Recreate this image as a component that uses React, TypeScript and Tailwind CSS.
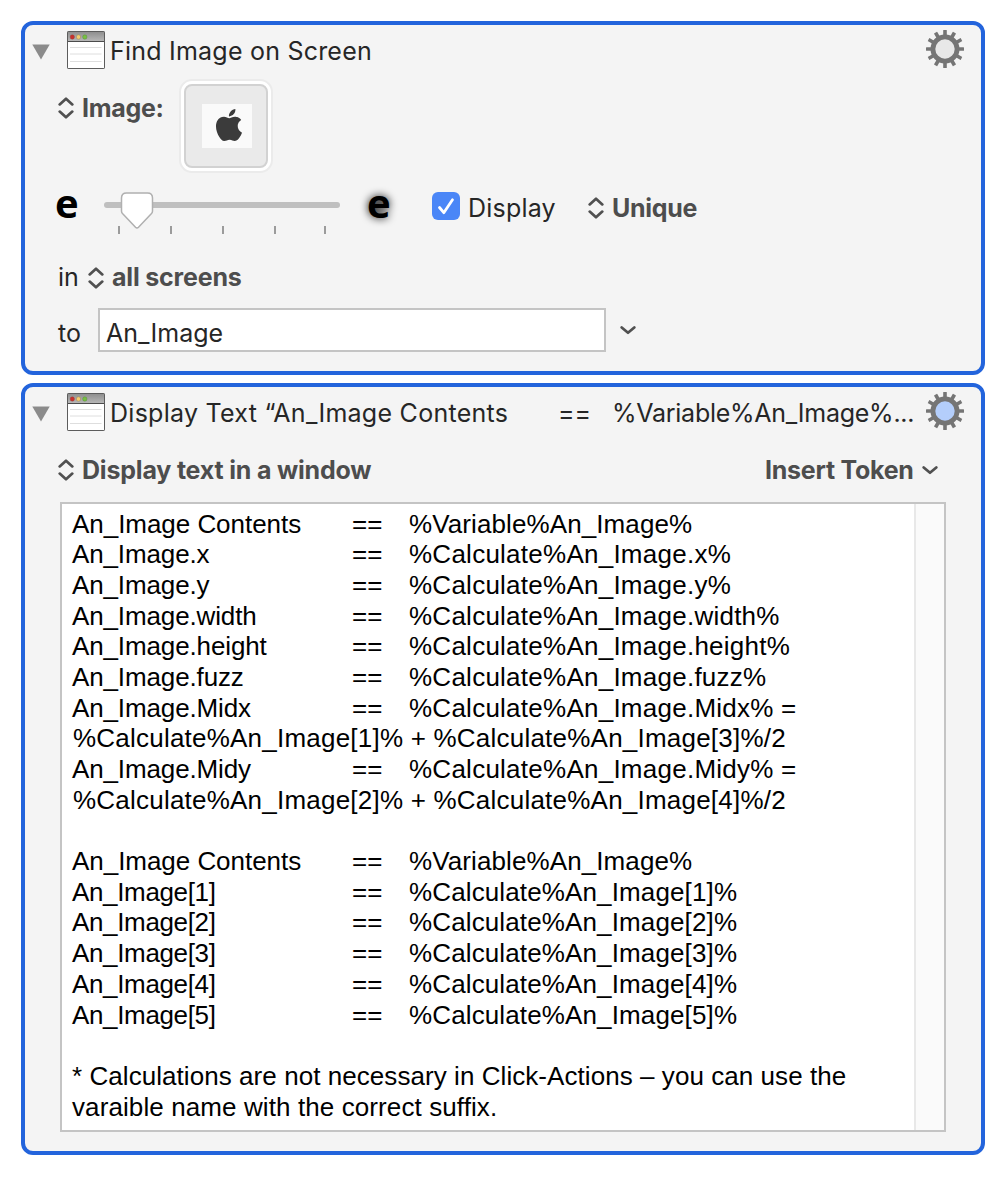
import React from "react";

interface IconProps {
  className?: string;
}

const UpDown: React.FC<IconProps> = ({ className }) => (
  <svg
    viewBox="0 0 16 22"
    className={`h-[22px] w-4 shrink-0 ${className ?? ""}`}
    fill="none"
    stroke="#505050"
    strokeWidth="2.7"
    strokeLinecap="round"
    strokeLinejoin="round"
  >
    <path d="M1.700 7.400 8 1.700l6.300 5.700M1.700 14.600l6.300 5.700 6.300-5.700" />
  </svg>
);

const Down: React.FC<IconProps> = ({ className }) => (
  <svg
    viewBox="0 0 16 10"
    className={`h-2.5 w-4 shrink-0 ${className ?? ""}`}
    fill="none"
    stroke="#505050"
    strokeWidth="2.7"
    strokeLinecap="round"
    strokeLinejoin="round"
  >
    <path d="M1.700 2.400 8 7.800l6.300-5.400" />
  </svg>
);

const WindowIcon = () => (
  <svg viewBox="0 0 38 38" className="ml-[17px] h-[38px] w-[38px] shrink-0">
    <defs>
      <linearGradient id="titlebar" x1="0" y1="0" x2="0" y2="1">
        <stop offset="0" stopColor="#8f8f8f" />
        <stop offset="1" stopColor="#b9b9b9" />
      </linearGradient>
    </defs>
    <rect x="0.5" y="0.5" width="37" height="37" rx="0.6" fill="#fff" stroke="#5c5c5c" />
    <rect x="1" y="1" width="36" height="9.5" fill="url(#titlebar)" />
    <path d="M1 10.500h36" stroke="#4b4b4b" strokeWidth="1" />
    <circle cx="5.3" cy="6" r="2.2" fill="#c9302c" stroke="#8a4a44" strokeWidth="0.4" />
    <circle cx="11.5" cy="6" r="2.2" fill="#f3cd72" stroke="#8d7a4c" strokeWidth="0.4" />
    <circle cx="17.8" cy="6" r="2.2" fill="#76c043" stroke="#55823a" strokeWidth="0.4" />
    <path d="M3 16.500h31.500M3 23h31.500M3 30.500h31.500" stroke="#dedede" strokeWidth="1" />
  </svg>
);

interface GearProps {
  fill: string;
}

const Gear: React.FC<GearProps> = ({ fill }) => (
  <svg viewBox="-19 -19 38 38" className="h-[38px] w-[38px] shrink-0">
    {Array.from({ length: 12 }, (_, i) => (
      <rect
        key={i}
        x="-1.8"
        y="-19"
        width="3.6"
        height="8"
        rx="0.5"
        fill="#757575"
        transform={`rotate(${i * 30})`}
      />
    ))}
    <circle r="12.1" fill={fill} stroke="#757575" strokeWidth="4.800" />
  </svg>
);

interface HeaderProps {
  gearFill: string;
  children: React.ReactNode;
}

const Header: React.FC<HeaderProps> = ({ gearFill, children }) => (
  <div className="flex h-[38px] items-center pl-[7px]">
    <svg viewBox="0 0 18 16" className="mt-[3px] h-4 w-[18px] shrink-0">
      <path d="M0.300 0.500h17.400L9 15.500z" fill="#8b8b8b" />
    </svg>
    <WindowIcon />
    <div className="ml-[5px] flex flex-1 whitespace-pre pt-[2px]">{children}</div>
    <div className="-mt-[2px] mr-[17px]">
      <Gear fill={gearFill} />
    </div>
  </div>
);

const Slider = () => (
  <svg viewBox="0 0 236 46" className="ml-[28px] h-[46px] w-[236px] shrink-0">
    <rect x="0" y="12" width="236" height="6" rx="3" fill="#bfbfbf" />
    {[14, 66, 118, 170, 220].map((x) => (
      <rect key={x} x={x} y="36" width="2" height="8" fill="#9b9b9b" />
    ))}
    <path
      d="M22.500 3h21q5 0 5 5v13q0 1.500-1 2.600L34.500 37.200q-1.500 1.500-3 0L18.500 23.600q-1-1.100-1-2.600V8q0-5 5-5z"
      fill="#fff"
      stroke="#b0b0b0"
      strokeWidth="1.500"
    />
  </svg>
);

const AppleLogo = () => (
  <svg viewBox="0 0 24 24" className="mb-[3px] ml-[3px] h-8 w-8" fill="#3b3b3b">
    <path d="M12.152 6.896c-.948 0-2.415-1.078-3.960-1.040-2.040.027-3.910 1.183-4.961 3.014-2.117 3.675-.546 9.103 1.519 12.090 1.013 1.454 2.208 3.090 3.792 3.039 1.520-.065 2.090-.987 3.935-.987 1.831 0 2.350.987 3.960.948 1.637-.026 2.676-1.480 3.676-2.948 1.156-1.688 1.636-3.325 1.662-3.415-.039-.013-3.182-1.221-3.220-4.857-.026-3.040 2.480-4.494 2.597-4.559-1.429-2.090-3.623-2.324-4.390-2.376-2-.156-3.675 1.090-4.610 1.090zM15.530 3.830c.843-1.012 1.400-2.427 1.245-3.830-1.207.052-2.662.805-3.532 1.818-.780.896-1.454 2.338-1.273 3.714 1.338.104 2.715-.688 3.559-1.701" />
  </svg>
);

const rows: [string, string, string?][] = [
  ["An_Image Contents", "%Variable%An_Image%"],
  ["An_Image.x", "%Calculate%An_Image.x%"],
  ["An_Image.y", "%Calculate%An_Image.y%"],
  ["An_Image.width", "%Calculate%An_Image.width%"],
  ["An_Image.height", "%Calculate%An_Image.height%"],
  ["An_Image.fuzz", "%Calculate%An_Image.fuzz%"],
  [
    "An_Image.Midx",
    "%Calculate%An_Image.Midx% =",
    "%Calculate%An_Image[1]% + %Calculate%An_Image[3]%/2",
  ],
  [
    "An_Image.Midy",
    "%Calculate%An_Image.Midy% =",
    "%Calculate%An_Image[2]% + %Calculate%An_Image[4]%/2",
  ],
];

const indexRows: [string, string, string?][] = [
  ["An_Image Contents", "%Variable%An_Image%"],
  ["An_Image[1]", "%Calculate%An_Image[1]%"],
  ["An_Image[2]", "%Calculate%An_Image[2]%"],
  ["An_Image[3]", "%Calculate%An_Image[3]%"],
  ["An_Image[4]", "%Calculate%An_Image[4]%"],
  ["An_Image[5]", "%Calculate%An_Image[5]%"],
];

interface LinesProps {
  items: [string, string, string?][];
  nameClass: string;
  valueClass: string;
}

const Lines: React.FC<LinesProps> = ({ items, nameClass, valueClass }) => (
  <>
    {items.map(([name, value, rest]) => (
      <div key={name}>
        <div className="grid grid-cols-[280px_57px_1fr]">
          <span className={name.endsWith("Contents") ? "tracking-[-0.04px]" : nameClass}>
            {name}
          </span>
          <span>==</span>
          <span className={name.endsWith("Contents") ? "tracking-[0.1px]" : valueClass}>
            {value}
          </span>
        </div>
        {rest && <p className="pl-px tracking-[0.22px]">{rest}</p>}
      </div>
    ))}
  </>
);

export default function App() {
  return (
    <div className="flex h-[1182px] w-[1006px] flex-col gap-2 bg-white pl-[21px] pt-[21px] font-['Inter',sans-serif] text-[25px] leading-8 text-[#262626]">
      <section className="h-[354px] w-[964px] rounded-xl border-4 border-[#2364dc] bg-[#f4f4f4] pt-[6px]">
        <Header gearFill="#e8e8e8">
          <span className="tracking-[0.22px]">Find Image on Screen</span>
        </Header>

        <div className="flex pl-[33px] pt-[10px]">
          <div className="flex h-[58px] items-center text-[#4d4d4d]">
            <UpDown />
            <span className="ml-2 w-[97px] font-bold tracking-[-0.3px]">Image:</span>
          </div>
          <div className="flex h-[94px] w-[94px] items-center justify-center rounded-[13px] border-2 border-[#ebebeb] bg-white">
            <div className="flex h-[84px] w-[84px] items-center justify-center rounded-lg border-2 border-[#d2d2d2] bg-[#eaeaea]">
              <div className="ml-[2px] flex h-11 w-[50px] items-center justify-center bg-[#fafafa]">
                <AppleLogo />
              </div>
            </div>
          </div>
        </div>

        <div className="mt-[17px] flex h-[46px] items-start pl-[30px]">
          <span className="-mt-[2px] w-[21px] font-['Open_Sans',sans-serif] text-[40px] font-bold leading-[30px] text-black">
            e
          </span>
          <Slider />
          <span className="-mt-[2px] ml-[27px] w-[21px] font-['Open_Sans',sans-serif] text-[40px] font-bold leading-[30px] text-black [text-shadow:0_0_8px_#000]">
            e
          </span>
          <div className="ml-[44px] mt-[2px] flex h-7 w-7 items-center justify-center rounded-[6px] bg-[#4a86f7]">
            <svg
              viewBox="0 0 28 28"
              className="h-7 w-7"
              fill="none"
              stroke="#fff"
              strokeWidth="2.800"
              strokeLinecap="round"
              strokeLinejoin="round"
            >
              <path d="M7.500 15.500l4.300 5.200L20.500 7.800" />
            </svg>
          </div>
          <span className="ml-2 w-[120px] pt-[2px] tracking-[0.2px]">Display</span>
          <UpDown className="mt-[7px]" />
          <span className="ml-2 pt-[2px] font-bold tracking-[-0.3px] text-[#4d4d4d]">Unique</span>
        </div>

        <div className="mt-[25px] flex h-8 items-center pl-[33px]">
          <span className="w-[30px]">in</span>
          <UpDown className="mt-[2px]" />
          <span className="ml-2 font-bold tracking-[-0.18px] text-[#4d4d4d]">all screens</span>
        </div>

        <div className="mt-[15px] flex h-11 items-center pl-[33px]">
          <span className="w-10 pt-[6px]">to</span>
          <div className="h-11 w-[508px] border-2 border-[#c4c4c4] bg-white pl-[6px] pt-[7px] tracking-[0.05px]">
            An_Image
          </div>
          <Down className="ml-[14px]" />
        </div>
      </section>

      <section className="h-[772px] w-[964px] rounded-xl border-4 border-[#2364dc] bg-[#f4f4f4] pt-[6px]">
        <Header gearFill="#b4cefb">
          <span className="w-[448px] tracking-[0.27px]">Display Text “An_Image Contents</span>
          <span className="w-[54px]">==</span>
          <span className="tracking-[-0.26px]">%Variable%An_Image%...</span>
        </Header>

        <div className="mt-[23px] flex h-8 items-center pl-[33px] font-bold tracking-[-0.19px] text-[#4d4d4d]">
          <UpDown />
          <span className="ml-2 w-[683px]">Display text in a window</span>
          <span className="w-[157px] tracking-[-0.25px]">Insert Token</span>
          <Down />
        </div>

        <div className="ml-[35px] mt-4 flex h-[630px] w-[886px] border-2 border-[#c4c4c4] bg-white">
          <div className="flex-1 whitespace-nowrap pl-[10px] pt-[4.5px] font-['Liberation_Sans',sans-serif] text-[26px] leading-[30.68px] text-black">
            <Lines
              items={rows}
              nameClass="tracking-[-0.13px]"
              valueClass="tracking-[0.25px]"
            />
            <br />
            <Lines
              items={indexRows}
              nameClass="tracking-[-0.35px]"
              valueClass="tracking-[0.13px]"
            />
            <br />
            <p className="tracking-[0.06px]">
              * Calculations are not necessary in Click-Actions – you can use the
            </p>
            <p className="tracking-[0.1px]">varaible name with the correct suffix.</p>
          </div>
          <div className="w-[30px] border-l-2 border-[#e8e8e8] bg-[#fafafa]" />
        </div>
      </section>
    </div>
  );
}
